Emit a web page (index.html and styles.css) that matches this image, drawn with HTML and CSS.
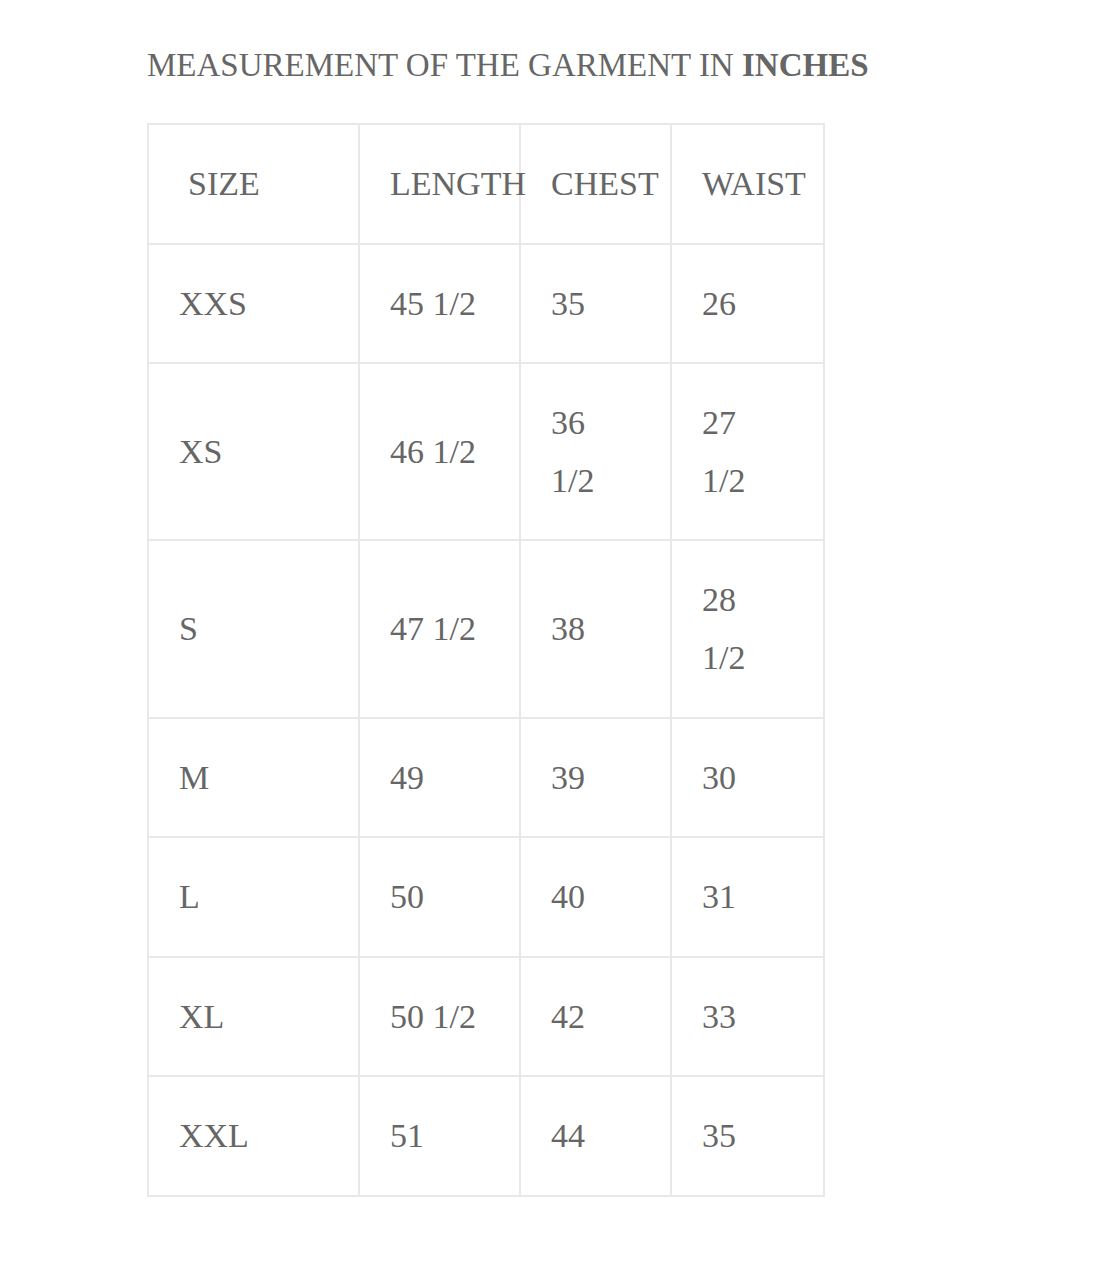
FILE: index.html
```html
<!DOCTYPE html>
<html lang="en">
<head>
<meta charset="utf-8">
<title>Measurement of the garment</title>
<link rel="stylesheet" href="styles.css">
</head>
<body>
<div class="page">
  <h2 class="title">MEASUREMENT OF THE GARMENT IN <strong>INCHES</strong></h2>
  <table class="sizes">
    <colgroup>
      <col class="c-size">
      <col class="c-length">
      <col class="c-chest">
      <col class="c-waist">
    </colgroup>
    <thead>
      <tr><th class="first">SIZE</th><th>LENGTH</th><th>CHEST</th><th>WAIST</th></tr>
    </thead>
    <tbody>
      <tr><td>XXS</td><td>45 1/2</td><td>35</td><td>26</td></tr>
      <tr><td>XS</td><td>46 1/2</td><td>36 1/2</td><td>27 1/2</td></tr>
      <tr><td>S</td><td>47 1/2</td><td>38</td><td>28 1/2</td></tr>
      <tr><td>M</td><td>49</td><td>39</td><td>30</td></tr>
      <tr><td>L</td><td>50</td><td>40</td><td>31</td></tr>
      <tr><td>XL</td><td>50 1/2</td><td>42</td><td>33</td></tr>
      <tr><td>XXL</td><td>51</td><td>44</td><td>35</td></tr>
    </tbody>
  </table>
</div>
</body>
</html>
```

FILE: styles.css
```css
html, body {
  margin: 0;
  padding: 0;
  background: #ffffff;
}

.page {
  padding: 40px 0 0 147px;
  font-family: "Liberation Serif", "Times New Roman", serif;
  color: #666666;
}

.title {
  margin: 0 0 33px 0;
  font-size: 33px;
  line-height: 50px;
  font-weight: normal;
  color: #666666;
}

.title strong {
  font-weight: bold;
}

.sizes {
  border-collapse: collapse;
  table-layout: fixed;
  width: 678px;
  font-size: 34px;
  line-height: 57.6px;
}

.c-size { width: 211px; }
.c-length { width: 161px; }
.c-chest { width: 151px; }
.c-waist { width: 153px; }

.sizes th,
.sizes td {
  border: 2px solid #e8e8e8;
  padding: 30px 40px 30px 30px;
  text-align: left;
  vertical-align: middle;
  font-weight: normal;
}

.sizes th {
  white-space: nowrap;
}

.sizes th.first {
  padding-left: 39px;
}
```
